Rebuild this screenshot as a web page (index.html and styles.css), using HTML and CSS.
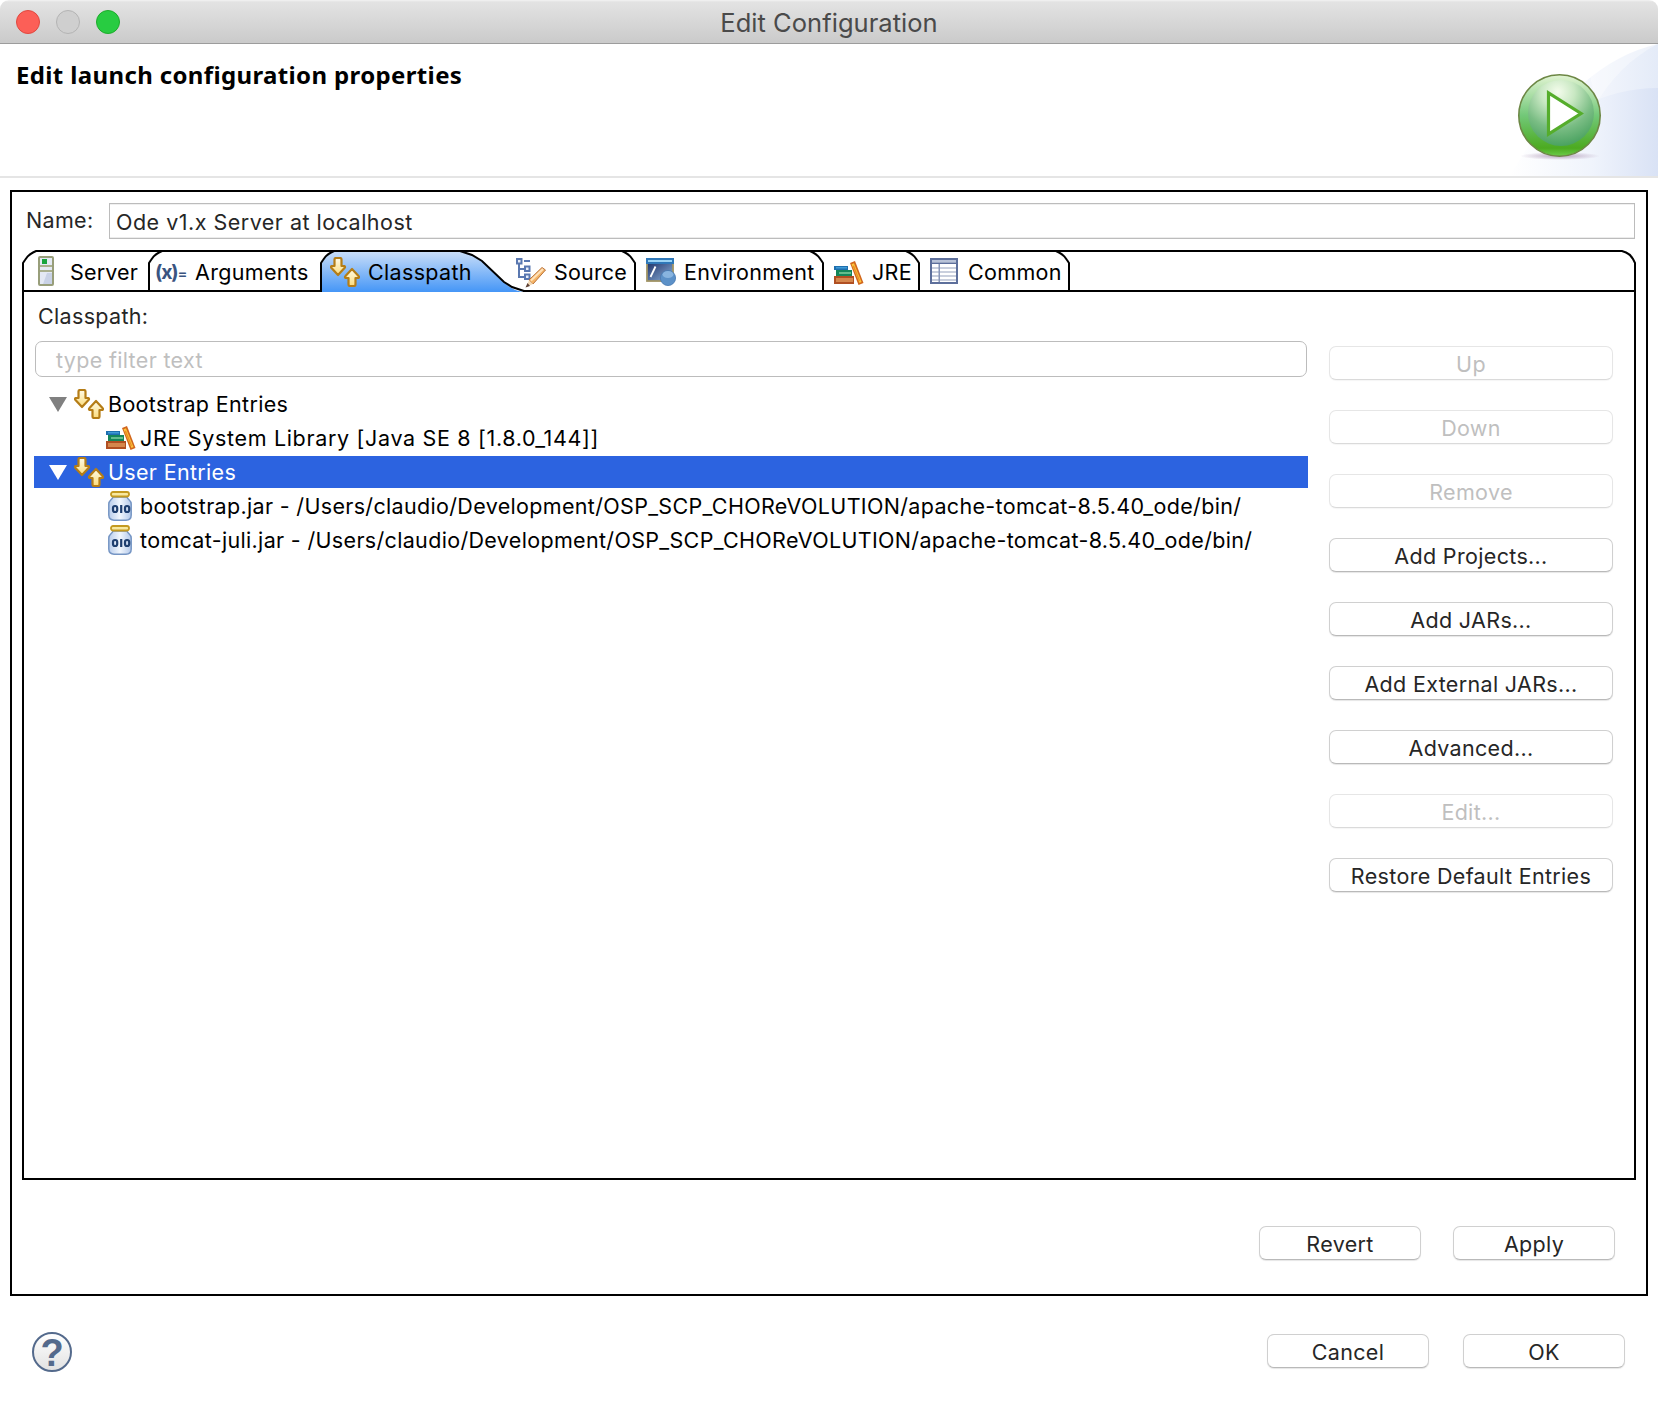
FILE: index.html
```html
<!DOCTYPE html>
<html lang="en">
<head>
<meta charset="utf-8">
<title>Edit Configuration</title>
<link rel="stylesheet" href="styles.css">
</head>
<body>
<svg class="defs" width="0" height="0" aria-hidden="true">
  <defs>
    <linearGradient id="gold" x1="0" y1="0" x2="0" y2="1"><stop offset="0" stop-color="#fffbe8"/><stop offset="1" stop-color="#fbdc7c"/></linearGradient>
    <linearGradient id="glass" x1="0" y1="0" x2="1" y2="0"><stop offset="0" stop-color="#b9cdec"/><stop offset=".5" stop-color="#f1f6fd"/><stop offset="1" stop-color="#b4c9ea"/></linearGradient>
    <symbol id="arrows" viewBox="0 0 30 30">
      <g fill="url(#gold)" stroke="#b57d17" stroke-width="2.200" stroke-linejoin="round">
        <path d="M4.500 2.500Q4.500 1 6 1H10Q11.500 1 11.500 2.500V9H14.500Q15.500 10 14.500 11L8 18L1.500 11Q.5 10 1.500 9H4.500Z"/>
        <path d="M18.500 27.500Q18.500 29 20 29H24Q25.500 29 25.500 27.500V21H28.500Q29.500 20 28.500 19L22 12L15.500 19Q14.500 20 15.500 21H18.500Z"/>
      </g>
    </symbol>
    <symbol id="books" viewBox="0 0 30 26">
      <path fill="#1e6fae" d="M0 6H14V10H0Z"/><path fill="#3f9bd8" d="M2 7H13V8.500H2Z"/>
      <path fill="#14865a" d="M2 10H18V16H2Z"/><path fill="#63bd8d" d="M5 12H17V14H5Z"/>
      <path fill="#b04f22" d="M0 16H20V24H0Z"/><path fill="#d5874d" d="M2 18H19V22H2Z"/>
      <path fill="#d2661d" d="M16 3L21 1L29.500 23L24.500 25Z"/><path fill="#fcc53c" d="M17.500 4.300L20 3.300L27.500 22L25.500 23Z"/><path fill="#e98f25" d="M18.500 6L20 5.500L26 20.500L25 21Z"/>
    </symbol>
    <symbol id="jar" viewBox="0 0 24 30">
      <path fill="url(#glass)" stroke="#7595c4" stroke-width="1.500" d="M5 6H19C20 9 23.200 9 23.200 13V24C23.200 27.500 21 29.200 18 29.200H6C3 29.200 .8 27.500 .8 24V13C.8 9 4 9 5 6Z"/>
      <rect x="3" y="1" width="18" height="4.500" rx="2" fill="#f8e9a0" stroke="#c49a20" stroke-width="1.800"/>
      <g fill="none" stroke="#1f3f70" stroke-width="2.200"><rect x="5" y="15" width="4.200" height="6" rx="2"/><path d="M13.200 14V22"/><rect x="17" y="15" width="4.200" height="6" rx="2"/></g>
    </symbol>
  </defs>
</svg>

<header class="titlebar">
  <div class="lights"><i class="light red"></i><i class="light grey"></i><i class="light green"></i></div>
  <h1 class="window-title">Edit Configuration</h1>
</header>

<section class="banner">
  <h2 class="banner-title">Edit launch configuration properties</h2>
  <svg class="banner-art" width="258" height="132" viewBox="0 0 258 132">
    <defs>
      <linearGradient id="swoosh" gradientUnits="userSpaceOnUse" x1="110" y1="0" x2="258" y2="0"><stop offset="0" stop-color="#fff"/><stop offset=".5" stop-color="#f6f8fd"/><stop offset="1" stop-color="#e4ebf8"/></linearGradient>
      <linearGradient id="swoosh2" gradientUnits="userSpaceOnUse" x1="110" y1="0" x2="258" y2="0"><stop offset="0" stop-color="#fff"/><stop offset=".55" stop-color="#f0f4fc"/><stop offset="1" stop-color="#d9e2f5"/></linearGradient>
      <radialGradient id="ball" cx=".45" cy=".18" r=".85"><stop offset="0" stop-color="#f4fcec"/><stop offset=".3" stop-color="#c9e8c3"/><stop offset=".65" stop-color="#7abd84"/><stop offset="1" stop-color="#459f5c"/></radialGradient>
      <linearGradient id="rim" x1="0" y1="0" x2="0" y2="1"><stop offset="0" stop-color="#e2f4d3"/><stop offset=".5" stop-color="#72c878"/><stop offset=".9" stop-color="#4caa20"/><stop offset="1" stop-color="#6ccc4a"/></linearGradient>
      <radialGradient id="shade"><stop offset="0" stop-color="#a98faf" stop-opacity=".8"/><stop offset="1" stop-color="#a98faf" stop-opacity="0"/></radialGradient>
    </defs>
    <path fill="url(#swoosh)" d="M110 132C145 70 195 14 258 0V132Z"/>
    <path fill="#fff" opacity=".35" d="M190 32C210 16 230 5 258 0C230 14 210 36 196 60Z"/>
    <path fill="url(#swoosh2)" d="M110 132C140 80 195 44 258 44V132Z"/>
    <ellipse cx="160" cy="112" rx="40" ry="4" fill="url(#shade)"/>
    <circle cx="159.500" cy="71.500" r="40.700" fill="url(#rim)" stroke="#6d8745" stroke-width="1.600"/>
    <circle cx="161" cy="69" r="33" fill="url(#ball)"/>
    <path fill="#fff" stroke="#55ad2b" stroke-width="3.200" d="M148.500 49V90L181 69.500Z"/>
  </svg>
</section>

<main class="frame">
  <div class="name-row">
    <label class="label">Name:</label>
    <div class="name-field">Ode v1.x Server at localhost</div>
  </div>

  <div class="folder">
    <nav class="strip">
      <svg class="outline" width="1614" height="42" viewBox="0 0 1614 42">
        <defs><linearGradient id="tabfill" x1="0" y1="0" x2="0" y2="1"><stop offset="0" stop-color="#cbdff8"/><stop offset="1" stop-color="#4596f7"/></linearGradient></defs>
        <path fill="url(#tabfill)" d="M300 42V13Q305 2 314 1H438C470 6 476 40 502 42Z"/>
        <g fill="none" stroke="#000" stroke-width="2">
          <path d="M1 42V13L3 10Q6 5 11 2.500L14 1H1600L1604 2.500Q1609 5 1611 9L1613 13V42"/>
          <path d="M1 41H299M501 41H1613"/>
          <path d="M127 41V13L129 10Q132 5 137 2.500L140 1"/>
          <path d="M299 42V13L301 10Q304 5 309 2.500L312 1"/>
          <path d="M438 1L450 5L460 11L482 32L490 37L502 41"/>
          <path d="M613 41V13L611 10Q608 5 603 2.500L600 1"/>
          <path d="M801 41V13L799 10Q796 5 791 2.500L788 1"/>
          <path d="M897 41V13L895 10Q892 5 887 2.500L884 1"/>
          <path d="M1047 41V13L1045 10Q1042 5 1037 2.500L1034 1"/>
        </g>
      </svg>
      <div class="tabs">
        <div class="tab t-server">
          <svg width="16" height="30" viewBox="0 0 16 30"><rect x="1" y="1" width="14" height="28" rx="1" fill="#e4e9f4" stroke="#989e7a" stroke-width="2"/><path fill="#c9d2e6" d="M9 17H14V28H5Z"/><path fill="#a9af8e" d="M2 9H14V11H2ZM2 14H14V16H2Z"/><rect x="4" y="3" width="5" height="5" fill="#17a43c"/></svg>
          <span>Server</span>
        </div>
        <div class="tab t-args"><b class="vars">(x)<span class="eq">=</span></b><span>Arguments</span></div>
        <div class="tab t-class"><svg width="30" height="30"><use href="#arrows"/></svg><span>Classpath</span></div>
        <div class="tab t-source">
          <svg width="30" height="30" viewBox="0 0 30 30"><g fill="#e8eefa" stroke="#5a78b0" stroke-width="2"><path fill="none" d="M3 6V19H9M3 11H9M8 3H14"/><rect x="1" y="1" width="4.500" height="4.500"/><rect x="9" y="8.500" width="4.500" height="4.500"/><rect x="9" y="16.500" width="4.500" height="4.500"/></g><path fill="#f6b567" stroke="#b9723a" d="M13 22L26 9.500L29.500 12L17 26Z"/><path stroke="#ffe2ba" stroke-width="2" d="M15 22.500L27 11"/><path fill="#f3d9b5" d="M13 22L17 26L10.500 29Z"/><path fill="#5d4034" d="M11.500 25L14 28L9.500 29.500Z"/></svg>
          <span>Source</span>
        </div>
        <div class="tab t-env">
          <svg width="30" height="28" viewBox="0 0 30 28"><defs><linearGradient id="term" x1="0" y1="0" x2="1" y2="1"><stop offset="0" stop-color="#1c2f66"/><stop offset="1" stop-color="#8fb4dc"/></linearGradient></defs><rect x="1" y="4" width="26" height="19" fill="url(#term)" stroke="#a19465" stroke-width="1.800"/><path fill="#2f78b9" d="M0 0H28V6H0Z"/><path fill="#9bd3f4" d="M2 2H26V4H2Z"/><path stroke="#fff" stroke-width="1.800" d="M4.500 19L9.500 8.500"/><circle cx="22" cy="20" r="7.600" fill="#5c91c8" stroke="#4878b0" stroke-width=".8"/><ellipse cx="22" cy="16.500" rx="5.500" ry="3.500" fill="#93bde5" opacity=".8"/></svg>
          <span>Environment</span>
        </div>
        <div class="tab t-jre"><svg width="30" height="26"><use href="#books"/></svg><span>JRE</span></div>
        <div class="tab t-common">
          <svg width="28" height="26" viewBox="0 0 28 26"><rect x="1" y="1" width="26" height="24" fill="#fff" stroke="#5d6f9b" stroke-width="2"/><path fill="#b9c3d8" d="M2 2H26V4.500H2Z"/><path fill="#5d6f9b" d="M2 4.500H26V6H2Z"/><path fill="#c9cfdd" d="M2 9H26V11H2ZM2 13H26V15H2ZM2 17H26V19H2ZM2 21H26V23H2Z"/><path fill="#8997b9" d="M8.500 6H10V24H8.500Z"/></svg>
          <span>Common</span>
        </div>
      </div>
    </nav>

    <div class="page">
      <div class="label page-label">Classpath:</div>
      <div class="columns">
        <div class="left">
          <div class="filter">type filter text</div>
          <div class="tree">
            <div class="row"><svg class="twist" width="18" height="15"><path fill="#808080" d="M0 0H18L9 15Z"/></svg><svg width="30" height="30"><use href="#arrows"/></svg><span>Bootstrap Entries</span></div>
            <div class="row child"><svg width="30" height="26"><use href="#books"/></svg><span class="library">JRE System Library [Java SE 8 [1.8.0_144]]</span></div>
            <div class="row selected"><svg class="twist" width="18" height="15"><path fill="#fff" d="M0 0H18L9 15Z"/></svg><svg width="30" height="30"><use href="#arrows"/></svg><span>User Entries</span></div>
            <div class="row child"><svg class="jar" width="24" height="30"><use href="#jar"/></svg><span>bootstrap.jar - /Users/claudio/Development/OSP_SCP_CHOReVOLUTION/apache-tomcat-8.5.40_ode/bin/</span></div>
            <div class="row child"><svg class="jar" width="24" height="30"><use href="#jar"/></svg><span>tomcat-juli.jar - /Users/claudio/Development/OSP_SCP_CHOReVOLUTION/apache-tomcat-8.5.40_ode/bin/</span></div>
          </div>
        </div>
        <div class="actions">
          <button class="btn" disabled>Up</button>
          <button class="btn" disabled>Down</button>
          <button class="btn" disabled>Remove</button>
          <button class="btn">Add Projects...</button>
          <button class="btn">Add JARs...</button>
          <button class="btn">Add External JARs...</button>
          <button class="btn">Advanced...</button>
          <button class="btn" disabled>Edit...</button>
          <button class="btn">Restore Default Entries</button>
        </div>
      </div>
    </div>
  </div>

  <div class="apply-row"><button class="btn">Revert</button><button class="btn">Apply</button></div>
</main>

<footer class="footer">
  <div class="help">?</div>
  <div class="footer-buttons"><button class="btn">Cancel</button><button class="btn">OK</button></div>
</footer>
</body>
</html>
```
FILE: styles.css
```css
* { box-sizing: border-box; }

body {
  margin: 0;
  width: 1658px;
  height: 1404px;
  background: #fff;
  color: #000;
  font: 21.5px "Inter", sans-serif;
  letter-spacing: .33px;
  overflow: hidden;
}

.defs { display: block; height: 0; }

svg { display: block; flex: none; }

.titlebar {
  display: grid;
  grid-template-columns: 140px 1fr 140px;
  height: 44px;
  background: linear-gradient(#f3f3f3 0, #e3e3e3 2px, #cbcbcb 42px);
  border-bottom: 1px solid #9c9c9c;
  border-radius: 9px 9px 0 0;
}

.lights { display: flex; gap: 16px; padding: 10px 0 0 16px; }
.light { width: 24px; height: 24px; border-radius: 50%; border: 1px solid; }
.red { background: #fc5f57; border-color: #e1483f; }
.grey { background: #cfcfcf; border-color: #b4b4b4; }
.green { background: #28cc41; border-color: #1dac2b; }

.window-title {
  margin: 0;
  text-align: center;
  font-size: 25.500px;
  font-weight: 400;
  letter-spacing: .04px;
  line-height: 46px;
  color: #4a4a4a;
}

.banner {
  display: flex;
  justify-content: space-between;
  height: 134px;
  border-bottom: 2px solid #e5e5e5;
}

.banner-title {
  margin: 14px 0 0 16px;
  font: 700 24px/34px "Noto Sans", sans-serif;
  letter-spacing: .36px;
}

.frame {
  margin: 12px 10px 0;
  height: 1106px;
  border: 2px solid #000;
  padding: 11px 10px 0;
}

.label { color: #262626; }

.name-row { display: flex; height: 36px; padding-right: 1px; }
.name-row .label { width: 87px; padding-left: 4px; line-height: 35px; }
.name-field {
  flex: 1;
  border: 1px solid #bcbcbc;
  box-shadow: inset 0 -1px #ececec, inset 0 1px #f0f0f0;
  padding-left: 6px;
  line-height: 37px;
  letter-spacing: .49px;
  color: #262626;
}

.folder {
  display: flex;
  flex-direction: column;
  width: 1614px;
  height: 930px;
  margin-top: 11px;
}

.strip { display: grid; height: 42px; }
.outline, .tabs { grid-area: 1 / 1; }
.tabs { display: flex; line-height: 44px; }
.tab { display: flex; align-items: flex-start; }
.tab svg { margin-top: 7px; }

.t-server { width: 126px; padding-left: 16px; gap: 16px; letter-spacing: .17px; }
.t-server svg { margin-top: 6px; }
.t-args { width: 172px; padding-left: 7px; gap: 6px; }
.vars { width: 34px; color: #3a5480; font-size: 19.500px; letter-spacing: -1.2px; white-space: nowrap; }
.eq { font-size: 15px; font-weight: 500; }
.t-class { width: 196px; padding-left: 10px; gap: 8px; }
.t-source { width: 118px; gap: 8px; letter-spacing: .17px; }
.t-source svg, .t-env svg, .t-common svg { margin-top: 8px; }
.t-env { width: 188px; padding-left: 12px; gap: 8px; }
.t-jre { width: 96px; padding-left: 12px; gap: 8px; }
.t-jre svg { margin-top: 10px; }
.t-common { padding-left: 12px; gap: 10px; }

.page {
  flex: 1;
  border: 2px solid #000;
  border-top: 0;
  padding: 11px 21px 0 10px;
}

.page-label { height: 38px; padding-left: 4px; line-height: 27px; }

.columns { display: flex; justify-content: space-between; }
.left { width: 1274px; }
.filter {
  width: 1272px;
  height: 36px;
  margin-left: 1px;
  border: 1px solid #bcbcbc;
  border-radius: 7px;
  padding-left: 20px;
  line-height: 37px;
  color: #bfbfbf;
}

.tree { display: flex; flex-direction: column; gap: 2px; margin-top: 11px; }
.row { display: flex; align-items: center; height: 32px; line-height: 32px; padding-left: 15px; }
.row .twist { margin-right: 7px; }
.row span { margin-left: 4px; white-space: nowrap; }
.child { padding-left: 72px; }
.row .library { letter-spacing: .67px; }
.jar { margin: 0 4px 0 2px; }
.selected { background: #2c63e0; color: #fff; }

.actions { display: flex; flex-direction: column; gap: 30px; width: 284px; padding-top: 5px; }

.btn {
  height: 34px;
  padding: 2px 0 0;
  border: 1px solid #d0d0d0;
  border-bottom-color: #b9b9b9;
  border-radius: 7px;
  box-shadow: 0 1px 1px rgba(0, 0, 0, .1);
  background: #fff;
  color: #262626;
  font: inherit;
  letter-spacing: inherit;
  line-height: 30px;
}
.btn:disabled { color: #bfbfbf; border-color: #e6e6e6; border-bottom-color: #dadada; box-shadow: 0 1px 1px rgba(0, 0, 0, .04); }

.apply-row { display: flex; justify-content: flex-end; gap: 32px; padding: 46px 21px 0 0; }
.apply-row .btn, .footer-buttons .btn { width: 162px; }

.footer { display: flex; justify-content: space-between; padding: 36px 33px 0 32px; }
.footer-buttons { display: flex; gap: 34px; padding-top: 2px; }
.help {
  width: 40px;
  height: 40px;
  border: 2px solid #546a8c;
  border-radius: 50%;
  background: linear-gradient(#fff, #e2e2e2);
  color: #546a8c;
  font: 700 38px/38px "Liberation Sans", sans-serif;
  letter-spacing: 0;
  text-align: center;
}
```
